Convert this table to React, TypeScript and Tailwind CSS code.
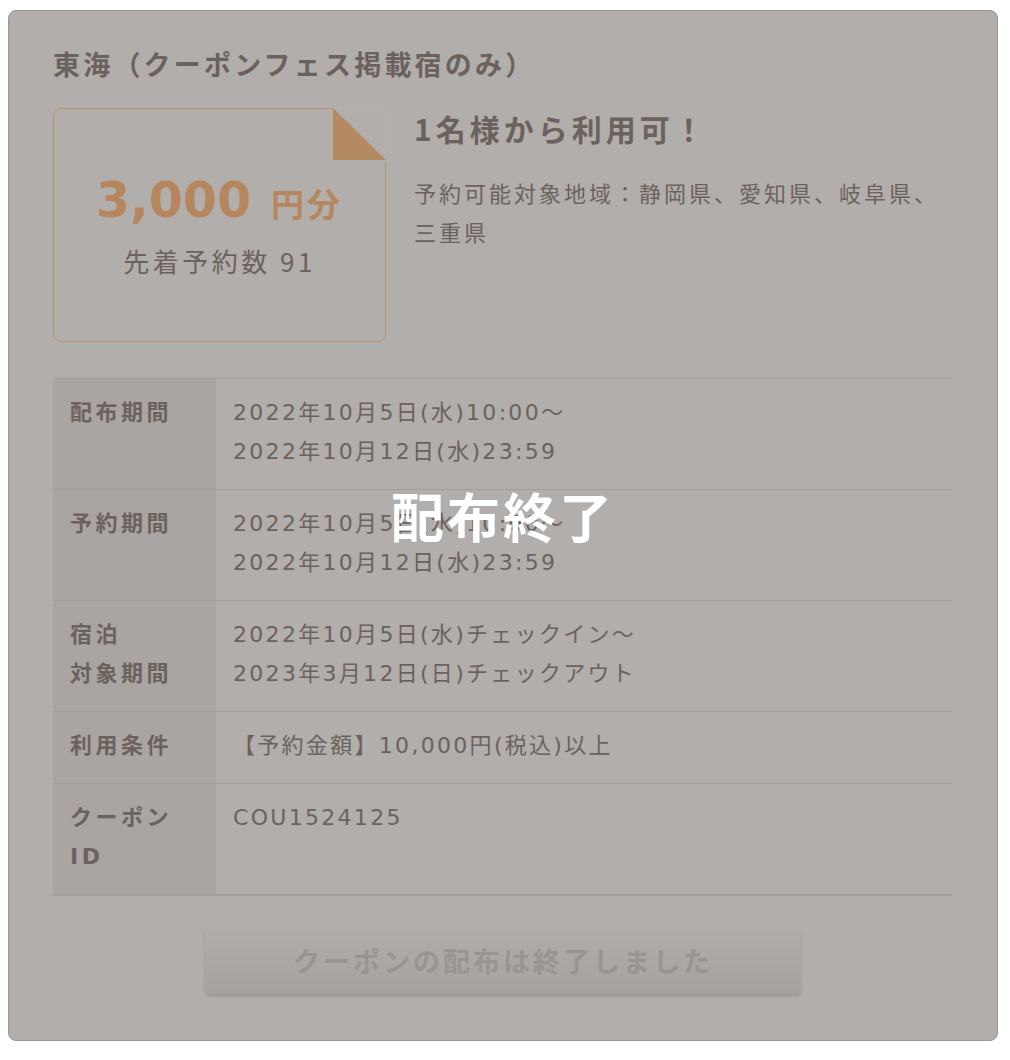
export default function App() {
	const rows = [
		{ label: ['配布期間'], value: ['2022年10月5日(水)10:00～', '2022年10月12日(水)23:59'] },
		{ label: ['予約期間'], value: ['2022年10月5日(水)10:00～', '2022年10月12日(水)23:59'] },
		{ label: ['宿泊', '対象期間'], value: ['2022年10月5日(水)チェックイン～', '2023年3月12日(日)チェックアウト'] },
		{ label: ['利用条件'], value: ['【予約金額】10,000円(税込)以上'] },
		{ label: ['クーポン', 'ID'], value: ['COU1524125'] },
	];
	const mixed = { fontFamily: '"DejaVu Sans", "Noto Sans CJK JP", sans-serif' };

	return (
		<div
			className="w-[1010px] h-[1060px] bg-white pl-[8px] pt-[10px]"
			style={{ fontFamily: '"Noto Sans CJK JP", "Noto Sans", sans-serif' }}>
			<div className="relative w-[990px] h-[1031px] rounded-[8px] border border-[#9c9795] bg-[#b2aeac] px-[44px] pt-[32px] text-[#6c625d]">
				<h2 className="text-[27px] leading-[42px] font-bold tracking-[3.2px]">東海（クーポンフェス掲載宿のみ）</h2>

				<div className="flex gap-[28px] mt-[23px]">
					<div className="relative w-[333px] h-[234px] shrink-0 rounded-[8px] border border-[#b8916c] flex flex-col items-center justify-center">
						<div className="absolute -top-px -right-px w-[53px] h-[53px] bg-[#b2aeac] border-t border-r border-[#b6b2b0]">
							<svg width="53" height="53" viewBox="0 0 53 53" className="block -mt-px -mr-px">
								<polygon points="0,0 0,52 53,52" fill="#b48a63" />
							</svg>
						</div>
						<div className="flex items-baseline text-[#b6875f] font-bold">
							<span className="text-[49px] leading-[62px]" style={{ fontFamily: '"DejaVu Sans", sans-serif' }}>
								3,000
							</span>
							<span className="text-[33px] ml-[20px] tracking-[3px]">円分</span>
						</div>
						<div className="text-[26px] leading-[38px] mt-[10px] tracking-[3.5px]">先着予約数 91</div>
					</div>
					<div className="flex-1">
						<div className="text-[30px] leading-[40px] font-bold tracking-[4px]">1名様から利用可！</div>
						<p className="text-[22px] leading-[39px] mt-[25px] tracking-[3px]">予約可能対象地域：静岡県、愛知県、岐阜県、三重県</p>
					</div>
				</div>

				<div className="mt-[36px] w-[899px] border-t border-b-2 border-[#a29d9b]">
					{rows.map((row, i) => (
						<div key={i} className="flex border-b border-[#a29d9b] last:border-b-0">
							<div
								className="w-[163px] shrink-0 bg-[#aaa5a3] pl-[17px] pt-[14px] pb-[18px] text-[22px] leading-[39px] font-bold tracking-[3.5px]"
								style={mixed}>
								{row.label.map((l, j) => (
									<div key={j}>{l}</div>
								))}
							</div>
							<div className="pl-[17px] pt-[14px] pb-[18px] text-[22px] leading-[39px] tracking-[2.3px]" style={mixed}>
								{row.value.map((v, j) => (
									<div key={j}>{v}</div>
								))}
							</div>
						</div>
					))}
				</div>

				<div className="flex justify-center mt-[32px]">
					<div className="w-[596px] h-[66px] rounded-[4px] bg-gradient-to-b from-[#b1adab] to-[#a6a2a0] shadow-[0_2px_3px_rgba(0,0,0,0.15)] flex items-center justify-center text-[27px] font-bold tracking-[3px] text-[#9a9491]">
						クーポンの配布は終了しました
					</div>
				</div>

				<div className="absolute inset-0 flex items-center justify-center pointer-events-none">
					<span className="text-white font-bold text-[53px] tracking-[3px] mb-[20px]">配布終了</span>
				</div>
			</div>
		</div>
	);
}
